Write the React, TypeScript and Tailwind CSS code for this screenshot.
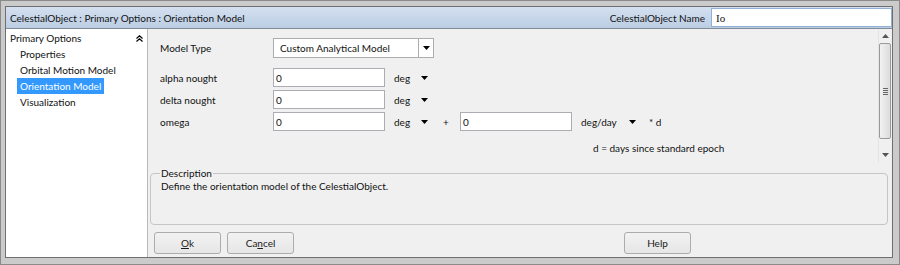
import React from 'react';

const NAV = ['Properties', 'Orbital Motion Model', 'Orientation Model', 'Visualization'];

function Caret({ className = '' }: { className?: string }) {
  return (
    <svg width="7" height="4" viewBox="0 0 7 4" className={className}>
      <path d="M0 0h7L3.5 4z" fill="#000" />
    </svg>
  );
}

function UnitPick({ unit, w }: { unit: string; w: string }) {
  return (
    <div className={`flex items-center ${w}`}>
      <span>{unit}</span>
      <Caret className="ml-auto mr-[4px]" />
    </div>
  );
}

function TextBox({ value, w = 'w-[112px]' }: { value: string; w?: string }) {
  return (
    <div className={`${w} h-[19px] bg-white border border-[#abadb3] flex items-center px-[2px]`}>{value}</div>
  );
}

function Btn({ children }: { children: React.ReactNode }) {
  return (
    <button className="w-[67px] h-[22px] rounded-[3px] border border-[#acacac] bg-gradient-to-b from-[#f2f2f2] to-[#e6e6e6] text-[#1a1a1a]">
      {children}
    </button>
  );
}

export default function App() {
  return (
    <div className="w-[900px] h-[265px] bg-[#cbcbcb] border border-[#8a8a8a] pl-[4px] pt-[5px] pr-[6px] pb-[6px] font-['Lato',sans-serif] text-[10px] leading-[14px] text-[#111]">
      <div className="h-full flex flex-col border border-[#6f6f6f] bg-[#f0f0f0]">
        {/* header */}
        <div className="h-[22px] flex items-center bg-gradient-to-b from-[#d3e0f0] to-[#bccde3] border-b border-[#7f8c99] pl-[4px]">
          <span>CelestialObject : Primary Options : Orientation Model</span>
          <span className="ml-auto mr-[6px]">CelestialObject Name</span>
          <div className="w-[181px] h-[19px] bg-white border border-[#8fb1d6] flex items-center px-[4px] font-['Liberation_Serif',serif] text-[11px]">Io</div>
        </div>

        <div className="flex-1 flex min-h-0">
          {/* left nav */}
          <div className="w-[142px] bg-white border-r border-[#b9b9b9] pt-[1px]">
            <div className="flex items-center h-[16px] pl-[4px] pr-[4px]">
              <span>Primary Options</span>
              <svg width="7" height="7" viewBox="0 0 7 7" className="ml-auto">
                <path d="M0.5 3.5L3.5 0.8L6.5 3.5M0.5 6.5L3.5 3.8L6.5 6.5" stroke="#000" strokeWidth="1.2" fill="none" />
              </svg>
            </div>
            <div className="flex flex-col items-start">
              {NAV.map((n) => (
                <div
                  key={n}
                  className={`h-[16px] flex items-center ml-[11px] px-[3px] ${n === 'Orientation Model' ? 'bg-[#3399ff] text-white' : ''}`}
                >
                  {n}
                </div>
              ))}
            </div>
          </div>

          {/* main */}
          <div className="flex-1 flex flex-col">
            <div className="h-[134px] flex">
              <div className="flex-1 pl-[12px] pt-[9px]">
                <div className="flex items-center h-[20px]">
                  <span className="w-[113px]">Model Type</span>
                  <div className="w-[161px] h-[20px] bg-white border border-[#acacac] flex items-center">
                    <span className="pl-[6px]">Custom Analytical Model</span>
                    <div className="ml-auto w-[15px] h-full border-l border-[#acacac] flex items-center justify-center">
                      <Caret />
                    </div>
                  </div>
                </div>
                <div className="flex flex-col gap-[3px] mt-[10px]">
                  <div className="flex items-center">
                    <span className="w-[113px]">alpha nought</span>
                    <TextBox value="0" />
                    <span className="w-[9px]" />
                    <UnitPick unit="deg" w="w-[38px]" />
                  </div>
                  <div className="flex items-center">
                    <span className="w-[113px]">delta nought</span>
                    <TextBox value="0" />
                    <span className="w-[9px]" />
                    <UnitPick unit="deg" w="w-[38px]" />
                  </div>
                  <div className="flex items-center">
                    <span className="w-[113px]">omega</span>
                    <TextBox value="0" />
                    <span className="w-[9px]" />
                    <UnitPick unit="deg" w="w-[38px]" />
                    <span className="ml-[11px] w-[17px]">+</span>
                    <TextBox value="0" />
                    <span className="w-[9px]" />
                    <UnitPick unit="deg/day" w="w-[59px]" />
                    <span className="ml-[9px]">* d</span>
                  </div>
                </div>
                <div className="pl-[433px] mt-[10px]">d = days since standard epoch</div>
              </div>
              {/* scrollbar */}
              <div className="w-[13px] flex flex-col items-center bg-[#f0f0f0] border-l border-[#e4e4e4] mr-[1px]">
                <svg width="7" height="4" viewBox="0 0 7 4" className="mt-[5px]">
                  <path d="M0 4h7L3.5 0z" fill="#555" />
                </svg>
                <div className="mt-[5px] w-[12px] h-[96px] rounded-[2px] border border-[#9a9a9a] bg-gradient-to-r from-[#f2f2f2] to-[#dcdcdc] flex items-center justify-center">
                  <div className="flex flex-col gap-[1px]">
                    <div className="w-[5px] h-px bg-[#666]" />
                    <div className="w-[5px] h-px bg-[#666]" />
                    <div className="w-[5px] h-px bg-[#666]" />
                    <div className="w-[5px] h-px bg-[#666]" />
                  </div>
                </div>
                <svg width="7" height="4" viewBox="0 0 7 4" className="mt-[14px]">
                  <path d="M0 0h7L3.5 4z" fill="#555" />
                </svg>
              </div>
            </div>

            {/* description */}
            <fieldset className="mx-[2px] mr-[4px] mt-[3px] h-[59px] border border-[#c5c5c5] rounded-[4px] px-[10px]">
              <legend className="px-[1px] -ml-[1px]">Description</legend>
              <div className="mt-[-1px]">Define the orientation model of the CelestialObject.</div>
            </fieldset>

            {/* buttons */}
            <div className="flex items-center gap-[6px] pl-[6px] pr-[201px] mt-[7px]">
              <Btn><span className="underline">O</span>k</Btn>
              <Btn>Ca<span className="underline">n</span>cel</Btn>
              <div className="ml-auto"><Btn>Help</Btn></div>
            </div>
          </div>
        </div>
      </div>
    </div>
  );
}
